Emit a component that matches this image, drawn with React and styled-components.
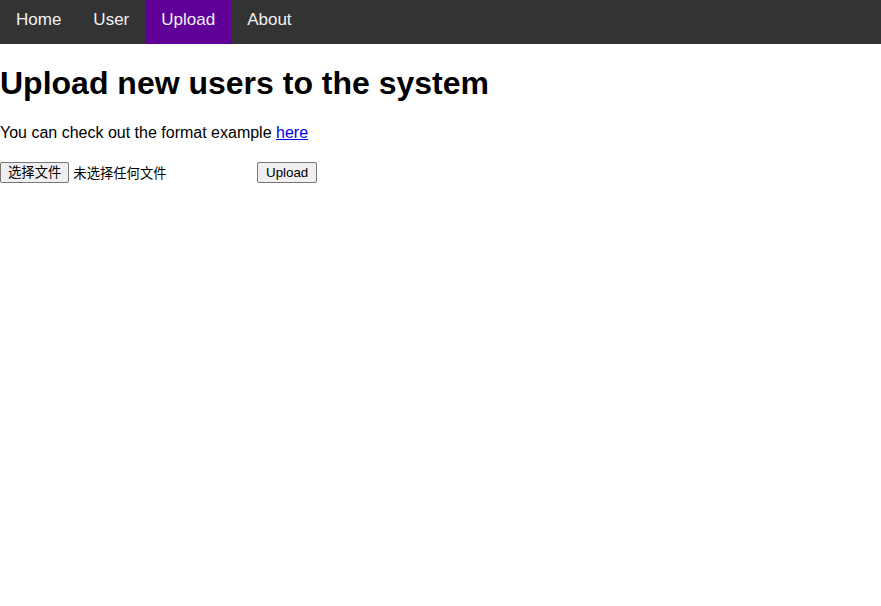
import React from 'react';
import styled, { createGlobalStyle } from 'styled-components';

const GlobalStyle = createGlobalStyle`
  body {
    margin: 0;
    font-family: "Liberation Sans", Arial, sans-serif;
    background: #ffffff;
    color: #000000;
  }
`;

const TopNav = styled.nav`
  background-color: #333333;
  display: flex;
  height: 44px;
`;

const NavLink = styled.a`
  display: block;
  box-sizing: border-box;
  height: 44px;
  color: #f2f2f2;
  text-decoration: none;
  font-size: 17px;
  line-height: 40px;
  padding: 0 16px 4px;
  background-color: ${(p) => (p.$active ? '#5f0099' : 'transparent')};
  cursor: pointer;
`;

const Title = styled.h1`
  font-size: 32px;
  font-weight: bold;
  margin: 21px 0;
`;

const Text = styled.p`
  font-size: 16px;
  margin: 16px 0;
  padding-top: 1px;
`;

const Link = styled.a`
  color: #0000ee;
  text-decoration: underline;
`;

const UploadForm = styled.form`
  display: flex;
  align-items: center;
  gap: 4px;
  margin-top: 20px;
`;

const FilePicker = styled.label`
  display: flex;
  align-items: center;
  gap: 4px;
  width: 253px;
  font-family: "Liberation Sans", "Noto Sans CJK SC", sans-serif;
  font-size: 13.33px;
  cursor: pointer;
`;

const HiddenInput = styled.input`
  display: none;
`;

const NativeButton = styled.span`
  display: inline-block;
  box-sizing: border-box;
  height: 21px;
  line-height: 17px;
  padding: 1px 7px;
  border: 1px solid #767676;
  border-radius: 2px;
  background-color: #efefef;
  color: #000000;
  font-family: "Liberation Sans", "Noto Sans CJK SC", sans-serif;
  font-size: 13.33px;
  white-space: nowrap;
`;

const SubmitButton = styled(NativeButton).attrs({ as: 'button', type: 'button' })`
  padding: 1px 8px;
  cursor: pointer;
`;

const FileName = styled.span`
  color: #000000;
`;

export default function App() {
  return (
    <>
      <GlobalStyle />
      <TopNav>
        <NavLink>Home</NavLink>
        <NavLink>User</NavLink>
        <NavLink $active>Upload</NavLink>
        <NavLink>About</NavLink>
      </TopNav>
      <Title>Upload new users to the system</Title>
      <Text>
        You can check out the format example <Link href="#">here</Link>
      </Text>
      <UploadForm>
        <FilePicker>
          <HiddenInput type="file" />
          <NativeButton>选择文件</NativeButton>
          <FileName>未选择任何文件</FileName>
        </FilePicker>
        <SubmitButton>Upload</SubmitButton>
      </UploadForm>
    </>
  );
}
